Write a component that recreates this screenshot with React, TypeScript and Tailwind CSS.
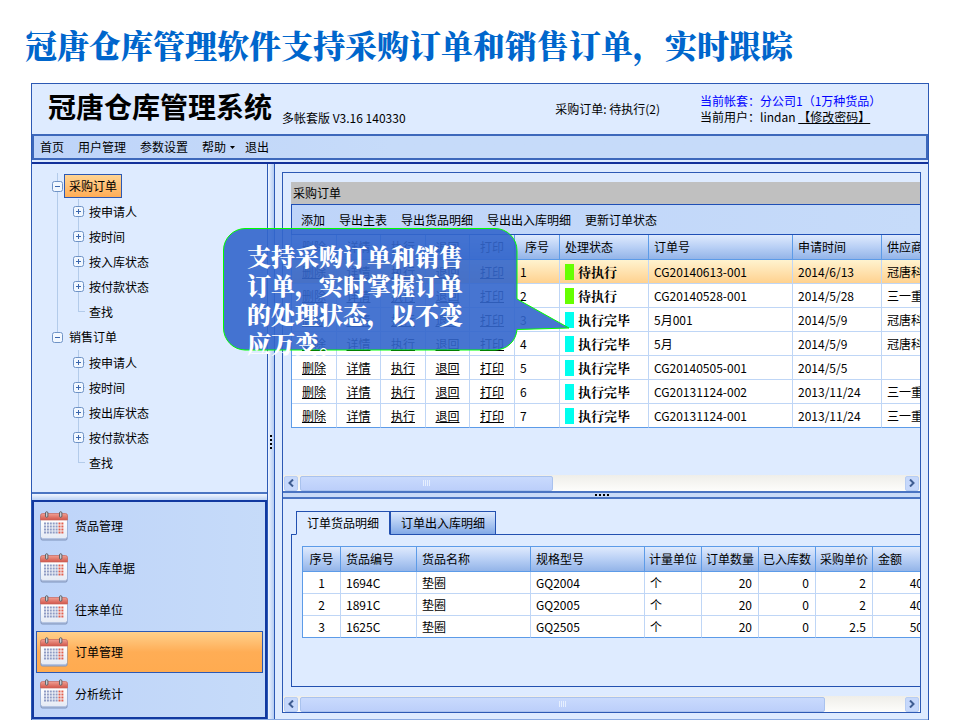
import { useState } from "react";
import clsx from "clsx";

const TREE = [
  { label: "采购订单", children: ["按申请人", "按时间", "按入库状态", "按付款状态", "查找"] },
  { label: "销售订单", children: ["按申请人", "按时间", "按出库状态", "按付款状态", "查找"] },
];

const MODULES = ["货品管理", "出入库单据", "往来单位", "订单管理", "分析统计"];
const TOOLBAR = ["添加", "导出主表", "导出货品明细", "导出出入库明细", "更新订单状态"];
const ACTIONS = ["删除", "详情", "执行", "退回", "打印"];

const ORDERS = [
  { status: "待执行", no: "CG20140613-001", date: "2014/6/13", supplier: "冠唐科技" },
  { status: "待执行", no: "CG20140528-001", date: "2014/5/28", supplier: "三一重工" },
  { status: "执行完毕", no: "5月001", date: "2014/5/9", supplier: "冠唐科技" },
  { status: "执行完毕", no: "5月", date: "2014/5/9", supplier: "冠唐科技" },
  { status: "执行完毕", no: "CG20140505-001", date: "2014/5/5", supplier: "" },
  { status: "执行完毕", no: "CG20131124-002", date: "2013/11/24", supplier: "三一重工" },
  { status: "执行完毕", no: "CG20131124-001", date: "2013/11/24", supplier: "三一重工" },
];

const ITEMS = [
  { code: "1694C", name: "垫圈", model: "GQ2004", unit: "个", qty: 20, stored: 0, price: 2, amount: 40 },
  { code: "1891C", name: "垫圈", model: "GQ2005", unit: "个", qty: 20, stored: 0, price: 2, amount: 40 },
  { code: "1625C", name: "垫圈", model: "GQ2505", unit: "个", qty: 20, stored: 0, price: 2.5, amount: 50 },
];

const ORDER_COLS = ["w-[45px]", "w-[44px]", "w-[45px]", "w-[44px]", "w-[45px]", "w-[45px]", "w-[89px]", "w-[144px]", "w-[89px]", "w-[89px]"];
const ITEM_COLS = ["w-[38px]", "w-[76px]", "w-[114px]", "w-[114px]", "w-[57px]", "w-[57px]", "w-[57px]", "w-[57px]", "w-[57px]"];

const SERIF = "font-['Noto_Serif_CJK_SC','Noto_Sans_CJK_SC',serif]";
const TH = "h-[25px] border-r border-b border-[#5c9be8] bg-linear-to-b from-[#dfeafd] via-[#b9d0f5] to-[#93b4e8] font-normal whitespace-nowrap";
const TD = "border-r border-b border-[#bfd6f6] [tr:last-child>&]:border-b-[#5c9be8]";

function Toggle({ open, label }: { open?: boolean; label: string }) {
  return (
    <button type="button" aria-label={label} className="relative z-10 shrink-0">
      <svg width="11" height="11" viewBox="0 0 11 11" className="block">
        <rect x="0.5" y="0.5" width="10" height="10" rx="2" fill="#f1f7ff" stroke="#6f93c6" />
        <path d={open ? "M3 5.5h5" : "M3 5.5h5M5.5 3v5"} stroke="#3a66ad" strokeWidth="1" />
      </svg>
    </button>
  );
}

function Tree() {
  return (
    <ul className="pt-[9px] pb-[17px]">
      {TREE.map((root, r) => (
        <li key={root.label} className="relative">
          {r === 0 && <span className="absolute top-0 left-[25px] h-[164px] w-px bg-[#b3cbea]" />}
          <div className="flex h-[26px] items-center pl-[20px]">
            <Toggle open label={root.label} />
            <a
              href="#"
              className={clsx(
                "ml-px flex h-[24px] items-center border px-1",
                r === 0 ? "border-[#2c59b4] bg-linear-to-b from-[#ffd493] to-[#ffad55]" : "border-transparent",
              )}
            >
              {root.label}
            </a>
          </div>
          <ul className="relative">
            <span className="absolute top-0 left-[46px] h-[113px] w-px bg-[#b3cbea]" />
            {root.children.map((child) => (
              <li key={child} className="flex h-[25px] items-center pl-[41px]">
                {child === "查找" ? (
                  <span className="ml-[5px] h-px w-[7px] bg-[#b3cbea]" />
                ) : (
                  <>
                    <Toggle label={child} />
                    <span className="h-px w-px bg-[#b3cbea]" />
                  </>
                )}
                <a href="#" className="ml-1">
                  {child}
                </a>
              </li>
            ))}
          </ul>
        </li>
      ))}
    </ul>
  );
}

function CalendarIcon() {
  const cols = [0, 1, 2, 3, 4, 5, 6];
  const rows = [0, 1, 2, 3];
  return (
    <svg width="28" height="30" viewBox="0 0 28 30" className="shrink-0" aria-hidden>
      <defs>
        <linearGradient id="calTop" x1="0" y1="0" x2="0" y2="1">
          <stop offset="0" stopColor="#f0a094" />
          <stop offset="1" stopColor="#d2564a" />
        </linearGradient>
        <linearGradient id="calPage" x1="0" y1="0" x2="0" y2="1">
          <stop offset="0" stopColor="#ffffff" />
          <stop offset="1" stopColor="#e6ebf5" />
        </linearGradient>
      </defs>
      <rect x="0.5" y="3" width="27" height="26.5" rx="2" fill="#7f93bb" />
      <path d="M1 9h26v16.500a1.500 1.500 0 0 1-1.500 1.500h-23a1.500 1.500 0 0 1-1.500-1.500z" fill="url(#calPage)" />
      <rect x="1.500" y="27" width="25" height="1.500" fill="#b4c4e2" />
      <path d="M0.500 9V4.500a2 2 0 0 1 2-2h23a2 2 0 0 1 2 2V9z" fill="url(#calTop)" stroke="#c9665b" strokeWidth="0.700" />
      {[5.5, 19.5].map((x) => (
        <rect key={x} x={x} y="0.700" width="2.400" height="5.600" rx="1.200" fill="#c9ced6" stroke="#55595f" strokeWidth="0.900" />
      ))}
      {rows.map((y) =>
        cols.map((x) => (
          <rect
            key={`${x}-${y}`}
            x={4 + x * 2.9}
            y={11.5 + y * 3}
            width="2"
            height="2"
            fill={x > 4 ? "#e2604f" : "#8f9cc4"}
          />
        )),
      )}
    </svg>
  );
}

function ModuleNav() {
  return (
    <nav className="border-2 border-[#1239a0] bg-linear-to-r from-[#bed4f9] to-[#c6dbf9] px-[2px] pt-[3px] pb-[2px]">
      {MODULES.map((name) => (
        <a
          key={name}
          href="#"
          className={clsx(
            "flex h-[42px] items-center gap-[7px] border pl-[3px]",
            name === "订单管理"
              ? "border-[#2c59b4] bg-linear-to-b from-[#ffd08a] via-[#ffad55] to-[#ffab50]"
              : "border-transparent",
          )}
        >
          <CalendarIcon />
          {name}
        </a>
      ))}
    </nav>
  );
}

function ScrollBar({ thumb }: { thumb: string }) {
  const btn = "flex h-[15px] w-[14px] shrink-0 items-center justify-center rounded-xs border border-[#b7cdf3] bg-[#c6d8fb]";
  return (
    <div className="flex h-4 items-center gap-[2px] bg-linear-to-b from-[#efeee9] to-[#fdfdfb] px-px">
      <button type="button" aria-label="向左滚动" className={btn}>
        <svg width="6" height="8" viewBox="0 0 6 8"><path d="M5 0.500 1.500 4 5 7.500" fill="none" stroke="#3f5d91" strokeWidth="2" /></svg>
      </button>
      <div className="flex flex-1">
        <div className={clsx("flex h-[15px] items-center justify-center gap-px rounded-xs border border-[#a9c2ee] bg-linear-to-b from-[#c9dafd] to-[#bccffa]", thumb)}>
          {[0, 1, 2, 3].map((i) => (
            <span key={i} className="h-[6px] w-px bg-[#e6effe]" />
          ))}
        </div>
      </div>
      <button type="button" aria-label="向右滚动" className={btn}>
        <svg width="6" height="8" viewBox="0 0 6 8"><path d="M1 0.500 4.500 4 1 7.500" fill="none" stroke="#3f5d91" strokeWidth="2" /></svg>
      </button>
    </div>
  );
}

function Dots({ vertical }: { vertical?: boolean }) {
  return (
    <div className={clsx("flex gap-[2px]", vertical && "flex-col")}>
      {[0, 1, 2, 3].map((i) => (
        <span key={i} className="size-[2px] bg-black" />
      ))}
    </div>
  );
}

function OrderTable() {
  return (
    <table className="w-[679px] table-fixed border-separate border-spacing-0 border-l border-[#5c9be8] bg-white">
      <colgroup>
        {ORDER_COLS.map((w, i) => (
          <col key={i} className={w} />
        ))}
      </colgroup>
      <thead>
        <tr>
          {[...ACTIONS, "序号"].map((h) => (
            <th key={h} className={clsx(TH, "text-center")}>{h}</th>
          ))}
          {["处理状态", "订单号", "申请时间", "供应商"].map((h) => (
            <th key={h} className={clsx(TH, "px-[5px] text-left")}>{h}</th>
          ))}
        </tr>
      </thead>
      <tbody>
        {ORDERS.map((o, i) => (
          <tr key={i} className={clsx("h-[24px]", i === 0 && "bg-linear-to-b from-[#fff3cf] to-[#ffd08c]")}>
            {ACTIONS.map((a) => (
              <td key={a} className={clsx(TD, "text-center")}>
                <a href="#" className="underline">{a}</a>
              </td>
            ))}
            <td className={clsx(TD, "px-[5px]")}>{i + 1}</td>
            <td className={clsx(TD, "px-[5px]")}>
              <div className={clsx("flex items-center gap-1 text-[13px] leading-4 font-bold", SERIF)}>
                <span className={clsx("h-4 w-[9px]", o.status === "待执行" ? "bg-[#66ff00]" : "bg-[#00ffee]")} />
                {o.status}
              </div>
            </td>
            <td className={clsx(TD, "px-[5px]")}>{o.no}</td>
            <td className={clsx(TD, "px-[5px]")}>{o.date}</td>
            <td className={clsx(TD, "px-[5px] whitespace-nowrap")}>{o.supplier}</td>
          </tr>
        ))}
      </tbody>
    </table>
  );
}

function ItemTable() {
  const num = clsx(TD, "px-[6px] text-right");
  return (
    <table className="w-[628px] table-fixed border-separate border-spacing-0 border-t border-l border-[#5c9be8] bg-white">
      <colgroup>
        {ITEM_COLS.map((w, i) => (
          <col key={i} className={w} />
        ))}
      </colgroup>
      <thead>
        <tr>
          <th className={clsx(TH, "text-center")}>序号</th>
          {["货品编号", "货品名称", "规格型号"].map((h) => (
            <th key={h} className={clsx(TH, "px-[5px] text-left")}>{h}</th>
          ))}
          {["计量单位", "订单数量", "已入库数", "采购单价"].map((h) => (
            <th key={h} className={clsx(TH, "text-center")}>{h}</th>
          ))}
          <th className={clsx(TH, "px-[5px] text-left")}>金额</th>
        </tr>
      </thead>
      <tbody>
        {ITEMS.map((item, i) => (
          <tr key={item.code} className="h-[22px]">
            <td className={clsx(TD, "text-center")}>{i + 1}</td>
            <td className={clsx(TD, "px-[5px]")}>{item.code}</td>
            <td className={clsx(TD, "px-[5px]")}>{item.name}</td>
            <td className={clsx(TD, "px-[5px]")}>{item.model}</td>
            <td className={clsx(TD, "px-[5px]")}>{item.unit}</td>
            <td className={num}>{item.qty}</td>
            <td className={num}>{item.stored}</td>
            <td className={num}>{item.price}</td>
            <td className={num}>{item.amount}</td>
          </tr>
        ))}
      </tbody>
    </table>
  );
}

function DetailTabs() {
  const [active, setActive] = useState(0);
  return (
    <div className="pt-3 pl-2">
      <div role="tablist" className="flex pl-[5px]">
        {["订单货品明细", "订单出入库明细"].map((tab, i) => (
          <button
            key={tab}
            type="button"
            role="tab"
            aria-selected={i === active}
            onClick={() => setActive(i)}
            className={clsx(
              "relative -mb-px h-[24px] border border-[#2250b0] px-[10px]",
              i === active ? "border-b-[#deebff] bg-[#deebff]" : "bg-linear-to-b from-[#dbe8fd] to-[#82a9e6]",
            )}
          >
            {tab}
          </button>
        ))}
      </div>
      <div className="overflow-hidden border-y border-l border-[#2250b0] pt-[11px] pb-12 pl-[10px]">
        <ItemTable />
      </div>
    </div>
  );
}

function Callout() {
  return (
    <div className="absolute top-[144px] left-[191px] z-20 h-[124px] w-[348px]">
      <svg width="348" height="124" viewBox="0 0 348 124" className="absolute inset-0" aria-hidden>
        <path
          d="M22 0.500H272a22 22 0 0 1 22 22V71L346 100 294 101.500a22 22 0 0 1-22 20.500H22a22 22 0 0 1-21.500-22V22a22 22 0 0 1 21.500-21.500z"
          fill="#3366cc"
          fillOpacity="0.900"
          stroke="#00ff00"
          strokeWidth="1"
        />
      </svg>
      <p className={clsx("relative w-[250px] pt-[13px] pl-6 text-2xl leading-[29px] font-black text-white", SERIF)}>
        支持采购订单和销售订单，实时掌握订单的处理状态，以不变应万变。
      </p>
    </div>
  );
}

export default function App() {
  return (
    <div className="flex h-screen flex-col overflow-hidden bg-white px-[31px] font-['Noto_Sans_CJK_SC',sans-serif] text-xs leading-4 text-black">
      <h1 className={clsx("-ml-[6px] shrink-0 pt-5 pb-[15px] text-[32px] leading-[48px] font-black whitespace-nowrap text-[#0066cc]", SERIF)}>
        冠唐仓库管理软件支持采购订单和销售订单，实时跟踪
      </h1>

      <div className="relative flex flex-1 flex-col border-x border-t border-[#2c59b4] bg-[#deebff]">
        <header className="flex h-[50px] shrink-0 items-center pl-4">
          <h2 className="pb-[6px] text-[28px] leading-[44px] font-bold">冠唐仓库管理系统</h2>
          <span className="mt-[18px] ml-[10px]">多帐套版 V3.16 140330</span>
          <span className="mr-10 ml-auto">采购订单: 待执行(2)</span>
          <div className="w-[228px]">
            <p className="text-[#0000ff]">当前帐套：分公司1（1万种货品）</p>
            <p>
              当前用户：lindan <a href="#" className="underline">【修改密码】</a>
            </p>
          </div>
        </header>

        <nav className="flex h-[26px] shrink-0 items-center gap-[14px] border-2 border-[#3d68bb] bg-linear-to-r from-[#bed4f9] to-[#c6dbf9] to-40% pl-[6px]">
          <a href="#">首页</a>
          <a href="#">用户管理</a>
          <a href="#">参数设置</a>
          <button type="button" className="-mr-1 flex items-center gap-1">
            帮助
            <svg width="5" height="3" viewBox="0 0 5 3"><path d="M0 0h5L2.500 3z" /></svg>
          </button>
          <a href="#">退出</a>
        </nav>

        <div className="mt-[2px] flex flex-1 border-t-2 border-b border-t-[#12309a] border-b-[#8aaae0]">
          <aside className="flex w-[236px] shrink-0 flex-col border-r border-[#2c59b4]">
            <Tree />
            <div className="h-[8px] shrink-0 border-t-2 border-[#4a74c2] bg-linear-to-b from-[#f0f6ff] to-[#bcd2f5]" />
            <ModuleNav />
          </aside>
          <div className="flex w-[7px] shrink-0 items-center justify-center border-r border-[#2c59b4] bg-linear-to-r from-[#f0f6ff] to-[#b4ccf3]">
            <Dots vertical />
          </div>

          <main className="min-w-0 flex-1 px-[7px] pt-2">
            <div className="border border-[#2c59b4]">
              <section className="overflow-hidden pt-[9px] pl-2">
                <h3 className="flex h-[22px] items-center bg-[#c0c0c0] pl-[2px]">采购订单</h3>
                <div className="flex h-[31px] items-center gap-[14px] border-y border-l border-[#1f4fb5] bg-linear-to-r from-[#bed4f9] to-[#c6dbf9] pl-[9px]">
                  {TOOLBAR.map((t) => (
                    <button key={t} type="button">{t}</button>
                  ))}
                </div>
                <OrderTable />
              </section>
              <div className="mt-[47px]">
                <ScrollBar thumb="w-[42%]" />
              </div>
              <div className="flex h-2 items-center justify-center border-y-2 border-[#4a74c2] bg-[#c9dbf8]">
                <Dots />
              </div>
              <DetailTabs />
              <div className="mt-[9px]">
                <ScrollBar thumb="w-[87%]" />
              </div>
            </div>
          </main>
        </div>

        <Callout />
      </div>
    </div>
  );
}
